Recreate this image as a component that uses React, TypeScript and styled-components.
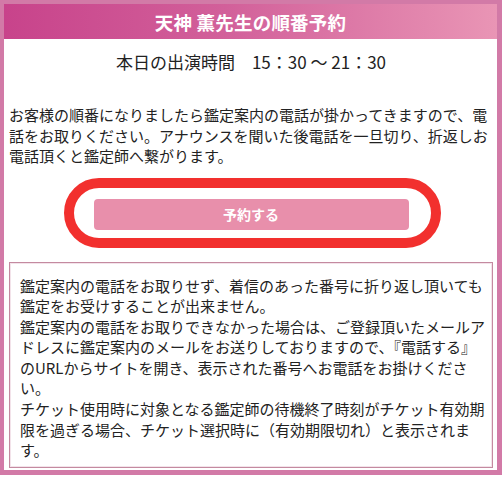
import React from "react";
import styled, { createGlobalStyle } from "styled-components";

const GlobalStyle = createGlobalStyle`
  html, body {
    margin: 0;
    padding: 0;
    background: #ffffff;
  }
  body {
    font-family: "Noto Sans CJK JP", "Noto Sans", sans-serif;
    color: #222222;
  }
`;

const Frame = styled.div`
  width: 502px;
  height: 475px;
  box-sizing: border-box;
  border-style: solid;
  border-color: #d27aa7;
  border-width: 4px 5px 5px 4px;
  display: flex;
  flex-flow: column;
  background: #ffffff;
`;

const Header = styled.h1`
  margin: 0;
  height: 35px;
  display: flex;
  align-items: center;
  justify-content: center;
  background: linear-gradient(90deg, #c8438b 0%, #d2609a 45%, #e995b5 100%);
  color: #ffffff;
  font-size: 18.5px;
  font-weight: 700;
  letter-spacing: 0.2px;
`;

const Body = styled.div`
  display: flex;
  flex-flow: column;
  padding: 0 4px 0 5px;
`;

const ShowTime = styled.div`
  margin-top: 13px;
  height: 20px;
  line-height: 20px;
  font-size: 17px;
  text-align: center;
  white-space: pre;
`;

const Lead = styled.p`
  margin: 33px 0 0;
  font-size: 15px;
  line-height: 20.5px;
`;

const ButtonRow = styled.div`
  display: flex;
  justify-content: center;
  margin-top: 32px;
`;

const ButtonWrap = styled.div`
  position: relative;
  width: 315px;
`;

const ReserveButton = styled.button`
  display: block;
  width: 100%;
  height: 31px;
  border: none;
  border-radius: 4px;
  background: #e88fab;
  color: #ffffff;
  font-family: "Noto Sans CJK JP", sans-serif;
  font-size: 14px;
  font-weight: 700;
  cursor: pointer;
`;

const Highlight = styled.span`
  position: absolute;
  left: -30px;
  right: -32px;
  top: -21px;
  bottom: -18px;
  border: 10px solid #f2302e;
  border-radius: 36px;
  pointer-events: none;
`;

const Notice = styled.div`
  margin-top: 32px;
  height: 206px;
  box-sizing: border-box;
  border: 1px solid #c48aa0;
  box-shadow: inset 0 0 0 1px #f3e3ea;
  padding: 13px 4px 0 10px;
  font-size: 15px;
  line-height: 20.6px;
`;

const NoticeLine = styled.p`
  margin: 0;
`;

const App: React.FC = () => {
  return (
    <>
      <GlobalStyle />
      <Frame>
        <Header>天神 薫先生の順番予約</Header>
        <Body>
          <ShowTime>本日の出演時間　15：30 ～ 21：30</ShowTime>
          <Lead>
            お客様の順番になりましたら鑑定案内の電話が掛かってきますので、電話をお取りください。アナウンスを聞いた後電話を一旦切り、折返しお電話頂くと鑑定師へ繋がります。
          </Lead>
          <ButtonRow>
            <ButtonWrap>
              <ReserveButton type="button">予約する</ReserveButton>
              <Highlight />
            </ButtonWrap>
          </ButtonRow>
          <Notice>
            <NoticeLine>
              鑑定案内の電話をお取りせず、着信のあった番号に折り返し頂いても鑑定をお受けすることが出来ません。
            </NoticeLine>
            <NoticeLine>
              鑑定案内の電話をお取りできなかった場合は、ご登録頂いたメールアドレスに鑑定案内のメールをお送りしておりますので、『電話する』のURLからサイトを開き、表示された番号へお電話をお掛けください。
            </NoticeLine>
            <NoticeLine>
              チケット使用時に対象となる鑑定師の待機終了時刻がチケット有効期限を過ぎる場合、チケット選択時に（有効期限切れ）と表示されます。
            </NoticeLine>
          </Notice>
        </Body>
      </Frame>
    </>
  );
};

export default App;
